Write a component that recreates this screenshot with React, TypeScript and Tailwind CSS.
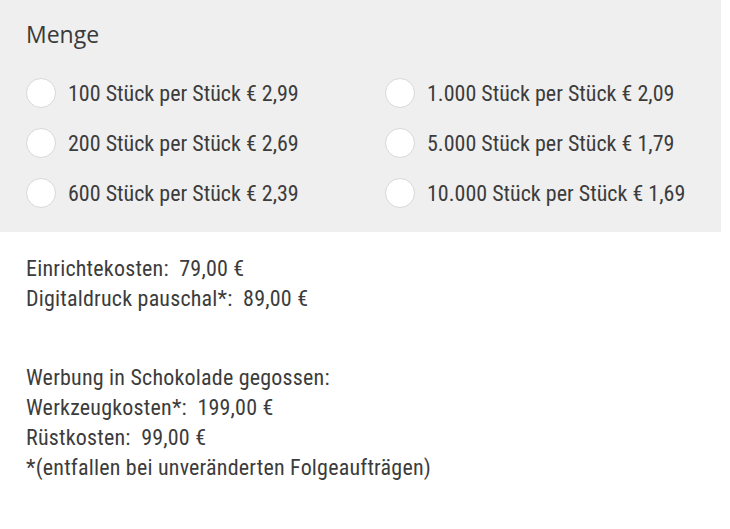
import React from 'react';

const options = [
    '100 Stück per Stück € 2,99',
    '1.000 Stück per Stück € 2,09',
    '200 Stück per Stück € 2,69',
    '5.000 Stück per Stück € 1,79',
    '600 Stück per Stück € 2,39',
    '10.000 Stück per Stück € 1,69',
]

function App() {
    const condensed = "font-['Roboto_Condensed','Liberation_Sans',sans-serif]"

    const getOptions = options.map((item, i) => {
        return (
            <label key={i} className="flex items-center h-[50px] cursor-pointer">
                <span className="w-[30px] h-[30px] rounded-full bg-white border border-[#d8d8d8] shrink-0"></span>
                <span className={`ml-[12px] text-[22px] text-[#3c3c3c] whitespace-nowrap ${condensed}`}>{item}</span>
            </label>
        )
    })

    return (
        <div className="w-[730px] h-[529px] bg-white">
            <div className="w-[721px] h-[232px] bg-[#efefef] pl-[26px] pt-[17px]">
                <div className="text-[23px] leading-[34px] text-[#3a3a3a] font-['Open_Sans',sans-serif]">Menge</div>
                <div className="grid grid-cols-[359px_1fr] mt-[17px]">
                    {getOptions}
                </div>
            </div>
            <div className={`pl-[26px] pt-[22px] text-[22px] leading-[30px] tracking-[0.2px] text-[#3c3c3c] ${condensed}`}>
                <p>Einrichtekosten:&nbsp; 79,00 €</p>
                <p>Digitaldruck pauschal*:&nbsp; 89,00 €</p>
                <p className="mt-[49px]">Werbung in Schokolade gegossen:</p>
                <p>Werkzeugkosten*:&nbsp; 199,00 €</p>
                <p>Rüstkosten:&nbsp; 99,00 €</p>
                <p>*(entfallen bei unveränderten Folgeaufträgen)</p>
            </div>
        </div>
    );
}

export default App;
